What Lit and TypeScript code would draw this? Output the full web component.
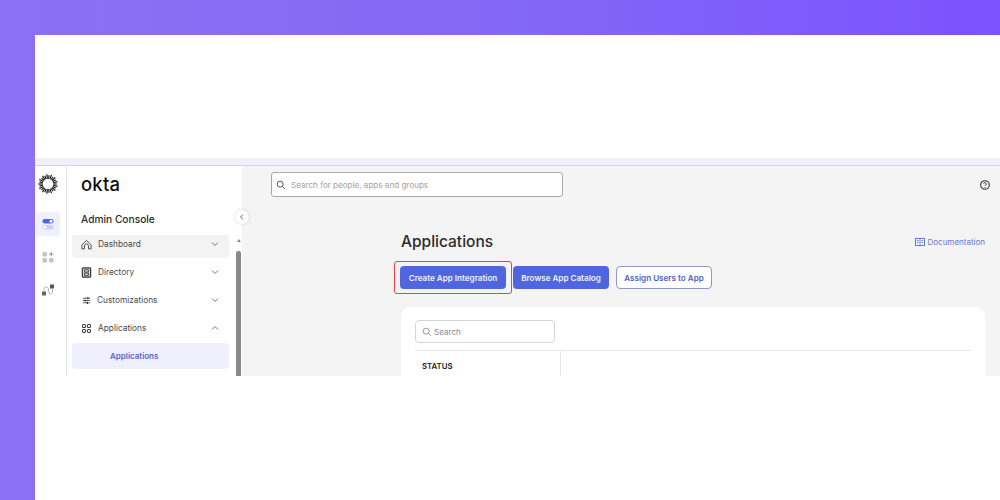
import { LitElement, html, css, svg } from "lit";
import { customElement } from "lit/decorators.js";

const chevronDown = svg`<path d="M2 3.500 5 6.500 8 3.500" fill="none" stroke="#777" stroke-width="1"/>`;
const chevronUp = svg`<path d="M2 6.500 5 3.500 8 6.500" fill="none" stroke="#777" stroke-width="1"/>`;

const navIcons: Record<string, unknown> = {
  home: svg`<path d="M1 6.500 6 1.500l5 5V10.800H8.200V7.500a2.200 2.200 0 0 0-4.400 0V10.800H1Z" fill="none" stroke="#444" stroke-width="1"/>`,
  directory: svg`<rect x="1.500" y="1" width="9" height="10" rx="1" fill="#d8d8d8" stroke="#333" stroke-width="1.300"/><rect x="4" y="3" width="4" height="2.500" fill="none" stroke="#333" stroke-width="0.900"/><rect x="4" y="6.700" width="4" height="2.500" fill="none" stroke="#333" stroke-width="0.900"/>`,
  custom: svg`<path d="M2 3.500h8M2 6h8M2 8.500h8" stroke="#444" stroke-width="0.900"/><path d="M7.500 2.300v2.400M4.500 4.800v2.400M7 7.300v2.400" stroke="#333" stroke-width="1.300"/>`,
  apps: svg`<rect x="1.600" y="1.600" width="3.400" height="3.400" rx="1.300" fill="none" stroke="#333" stroke-width="1.100"/><rect x="7" y="1.600" width="3.400" height="3.400" rx="1.300" fill="none" stroke="#333" stroke-width="1.100"/><rect x="1.600" y="7" width="3.400" height="3.400" rx="1.300" fill="none" stroke="#333" stroke-width="1.100"/><rect x="7" y="7" width="3.400" height="3.400" rx="1.300" fill="none" stroke="#333" stroke-width="1.100"/>`,
};

const searchIcon = (colour: string) => html`<svg width="10" height="10" viewBox="0 0 12 12">
  <circle cx="5" cy="5" r="3.600" fill="none" stroke=${colour} stroke-width="1.200"/>
  <path d="M7.700 7.700 10.500 10.500" stroke=${colour} stroke-width="1.200"/>
</svg>`;

// sunburst mark: dense spokes around an open centre
const burstSpokes = Array.from({ length: 26 }, (_, i) => {
  const a = (i / 26) * Math.PI * 2;
  const r1 = 5.200;
  const r2 = i % 2 ? 9.800 : 8.800;
  return svg`<line x1=${10 + Math.cos(a) * r1} y1=${10 + Math.sin(a) * r1} x2=${10 + Math.cos(a) * r2} y2=${10 + Math.sin(a) * r2} stroke="#111" stroke-width="1.150"/>`;
});

@customElement("app-root")
export class AppRoot extends LitElement {
  static override styles = css`
    :host {
      display: block;
      width: 1000px;
      height: 500px;
      box-sizing: border-box;
      padding: 35px 0 0 35px;
      background: linear-gradient(90deg, #8c70f3 0%, #8468f5 50%, #7b52ff 100%);
      font-family: Inter, "Liberation Sans", sans-serif;
      overflow: hidden;
    }

    .sheet {
      height: 465px;
      background: #fff;
      padding-top: 123px;
      box-sizing: border-box;
    }

    .strip {
      height: 7px;
      background: #f1effc;
      border-bottom: 1px solid #d5d2ea;
    }

    .app {
      display: flex;
      height: 210px;
      overflow: hidden;
    }

    .rail {
      width: 32px;
      box-sizing: border-box;
      flex: none;
      border-right: 1px solid #e6e6e6;
      display: flex;
      flex-direction: column;
      align-items: center;
      padding: 8px 5px 0 0;
    }

    .rail-item {
      width: 24px;
      height: 24px;
      border-radius: 3px;
      display: flex;
      align-items: center;
      justify-content: center;
      margin-bottom: 9px;
    }

    .rail-item.on {
      background: #eff0fb;
    }

    .burst {
      margin-bottom: 18px;
      display: block;
    }

    .side {
      width: 175px;
      flex: none;
      position: relative;
      background: #fff;
      display: flex;
      flex-direction: column;
    }

    .logo {
      font-size: 18.500px;
      line-height: 24px;
      font-weight: 500;
      color: #111;
      padding: 6px 0 0 14px;
      letter-spacing: 0.200px;
    }

    .console {
      font-size: 10.200px;
      line-height: 14px;
      font-weight: 500;
      color: #2a2a2a;
      padding: 16px 0 0 14px;
    }

    .nav-wrap {
      display: flex;
      margin-top: 9px;
      flex: 1;
      min-height: 0;
    }

    nav {
      width: 157px;
      margin-left: 5px;
      flex: none;
    }

    .nav-item {
      height: 28px;
      box-sizing: border-box;
      display: flex;
      align-items: center;
      padding: 0 9px 0 9px;
      font-size: 8.300px;
      color: #4a4a4a;
      gap: 6px;
    }

    .nav-item.clipped {
      height: 23px;
      padding-bottom: 5px;
      border-radius: 0 0 4px 4px;
      background: #f3f3f3;
    }

    .nav-item .label {
      flex: 1;
    }

    .nav-item .tight {
      margin-left: -1px;
    }

    .nav-sub {
      height: 26px;
      margin-top: 1px;
      background: #eff0fb;
      border-radius: 4px;
      display: flex;
      align-items: center;
      padding-left: 38px;
      font-size: 8px;
      font-weight: 600;
      color: #5865c4;
    }

    .scroll {
      margin-left: 6px;
      width: 7px;
      flex: none;
      display: flex;
      flex-direction: column;
      align-items: center;
    }

    .scroll .up {
      width: 0;
      height: 0;
      border: 2.500px solid transparent;
      border-top: 0;
      border-bottom: 3px solid #888;
      margin-top: 4px;
    }

    .scroll .thumb {
      width: 5.500px;
      flex: 1;
      margin-top: 9px;
      background: #8a8a8a;
      border-radius: 2px 2px 0 0;
    }

    .collapse {
      position: absolute;
      left: 168px;
      top: 44px;
      width: 14px;
      height: 14px;
      border-radius: 50%;
      background: #fff;
      box-shadow: 0 0 3px rgba(0, 0, 0, 0.18);
      display: flex;
      align-items: center;
      justify-content: center;
      z-index: 1;
    }

    main {
      flex: 1;
      background: #f4f4f4;
      padding: 6px 15px 0 29px;
      min-width: 0;
    }

    .top {
      display: flex;
      align-items: center;
      justify-content: space-between;
      margin-right: -6px;
    }

    .global-search {
      width: 292px;
      height: 25px;
      box-sizing: border-box;
      background: #fff;
      border: 1px solid #a9a9a9;
      border-radius: 3px;
      display: flex;
      align-items: center;
      gap: 5px;
      padding-left: 4px;
      font-size: 8.100px;
      color: #a2a2a2;
    }

    .content {
      margin: 33px 0 0 130px;
    }

    .title-row {
      display: flex;
      align-items: center;
      justify-content: space-between;
      height: 24px;
    }

    h1 {
      margin: 0;
      font-size: 15.500px;
      line-height: 24px;
      font-weight: 500;
      color: #2b2b2b;
    }

    .doc {
      display: flex;
      align-items: center;
      gap: 3px;
      font-size: 8px;
      color: #6a79c9;
    }

    .actions {
      display: flex;
      gap: 7px;
      margin: 12px 0 0 -1px;
    }

    .btn {
      height: 23px;
      box-sizing: border-box;
      border-radius: 4px;
      font-size: 8.100px;
      font-weight: 600;
      display: flex;
      align-items: center;
      justify-content: center;
    }

    .btn.primary {
      background: #4f66de;
      color: #f1f3fd;
    }

    .btn.outline {
      background: #fff;
      border: 1px solid #8f9ac9;
      color: #4f5fb8;
    }

    .create {
      width: 106px;
      position: relative;
    }

    .create::after {
      content: "";
      position: absolute;
      inset: -5px -6px -5px -6px;
      border: 1.500px solid #ee3f47;
      border-radius: 3px;
    }

    .browse {
      width: 96px;
    }

    .assign {
      width: 96px;
    }

    .card {
      margin-top: 18px;
      background: #fff;
      border-radius: 9px 9px 0 0;
      padding: 13px 14px 0;
      height: 70px;
      box-sizing: border-box;
    }

    .card-search {
      width: 140px;
      height: 23px;
      box-sizing: border-box;
      border: 1px solid #d5d5d5;
      border-radius: 4px;
      display: flex;
      align-items: center;
      gap: 2px;
      padding-left: 6px;
      font-size: 8.100px;
      color: #8a8a8a;
    }

    .table {
      margin-top: 7px;
      border-top: 1px solid #e8e8e8;
      display: flex;
      height: 40px;
    }

    .status {
      width: 146px;
      box-sizing: border-box;
      border-right: 1px solid #e8e8e8;
      padding: 10px 0 0 7px;
      font-size: 7.800px;
      line-height: 10px;
      font-weight: 600;
      color: #222;
    }
  `;

  private navRow(icon: string, label: string, up: boolean, rowClass = "", labelClass = "") {
    return html`<div class="nav-item ${rowClass}">
      <svg width="11" height="11" viewBox="0 0 12 12">${navIcons[icon]}</svg>
      <span class="label ${labelClass}">${label}</span>
      <svg width="10" height="10" viewBox="0 0 10 10">${up ? chevronUp : chevronDown}</svg>
    </div>`;
  }

  override render() {
    return html`
      <div class="sheet">
        <div class="strip"></div>
        <div class="app">
          <div class="rail">
            <svg class="burst" width="20" height="20" viewBox="0 0 20 20">${burstSpokes}</svg>
            <div class="rail-item on">
              <svg width="14" height="14" viewBox="0 0 14 14">
                <rect x="1.500" y="2" width="11" height="4.500" rx="2.250" fill="#4f66de"/>
                <circle cx="10" cy="4.250" r="1.400" fill="#fff"/>
                <rect x="1.500" y="8" width="11" height="4.500" rx="2.250" fill="#c9d0f3"/>
                <circle cx="4" cy="10.250" r="1.400" fill="#fff"/>
              </svg>
            </div>
            <div class="rail-item">
              <svg width="14" height="14" viewBox="0 0 14 14" fill="#c4c4c4">
                <rect x="1.500" y="2" width="4.500" height="4.500" rx="0.800"/>
                <rect x="1.500" y="8" width="4.500" height="4.500" rx="0.800"/>
                <rect x="8" y="8" width="4.500" height="4.500" rx="0.800"/>
                <path d="M10.250 1.800v4.500M8 4.050h4.500" stroke="#999" stroke-width="1.100"/>
              </svg>
            </div>
            <div class="rail-item">
              <svg width="14" height="14" viewBox="0 0 14 14">
                <rect x="1" y="8.500" width="4" height="4" fill="#666"/>
                <rect x="9" y="1.500" width="4" height="4" fill="#555"/>
                <path d="M3 8.500V6a2.200 2.200 0 0 1 4.400 0v2.500a2.200 2.200 0 0 0 4.100 1V5.500" fill="none" stroke="#b5b5b5" stroke-width="1"/>
              </svg>
            </div>
          </div>
          <div class="side">
            <div class="logo">okta</div>
            <div class="console">Admin Console</div>
            <div class="collapse">
              <svg width="8" height="8" viewBox="0 0 8 8"><path d="M5 1.500 2.500 4 5 6.500" fill="none" stroke="#5865c4" stroke-width="1"/></svg>
            </div>
            <div class="nav-wrap">
              <nav>
                ${this.navRow("home", "Dashboard", false, "clipped")}
                ${this.navRow("directory", "Directory", false)}
                ${this.navRow("custom", "Customizations", false, "", "tight")}
                ${this.navRow("apps", "Applications", true)}
                <div class="nav-sub">Applications</div>
              </nav>
              <div class="scroll"><div class="up"></div><div class="thumb"></div></div>
            </div>
          </div>
          <main>
            <div class="top">
              <div class="global-search">${searchIcon("#555")}<span>Search for people, apps and groups</span></div>
              <svg width="12" height="12" viewBox="0 0 12 12">
                <circle cx="6" cy="6" r="4.300" fill="none" stroke="#333" stroke-width="1.100"/>
                <path d="M4.700 4.900a1.300 1.300 0 1 1 2 1.100c-.5.300-.7.500-.7 1" fill="none" stroke="#333" stroke-width="0.900"/>
                <circle cx="6" cy="8.500" r="0.600" fill="#333"/>
              </svg>
            </div>
            <div class="content">
              <div class="title-row">
                <h1>Applications</h1>
                <div class="doc">
                  <svg width="10" height="10" viewBox="0 0 10 10">
                    <rect x="0.500" y="1.500" width="9" height="7" fill="none" stroke="#5f7fc9" stroke-width="1"/>
                    <path d="M5 1.500v8M1.800 3.500h2M1.800 5.500h2M6.200 3.500h2M6.200 5.500h2" stroke="#5f7fc9" stroke-width="0.800"/>
                  </svg>
                  <span>Documentation</span>
                </div>
              </div>
              <div class="actions">
                <div class="btn primary create">Create App Integration</div>
                <div class="btn primary browse">Browse App Catalog</div>
                <div class="btn outline assign">Assign Users to App</div>
              </div>
              <div class="card">
                <div class="card-search">${searchIcon("#999")}<span>Search</span></div>
                <div class="table"><div class="status">STATUS</div></div>
              </div>
            </div>
          </main>
        </div>
      </div>
    `;
  }
}

declare global {
  interface HTMLElementTagNameMap {
    "app-root": AppRoot;
  }
}
